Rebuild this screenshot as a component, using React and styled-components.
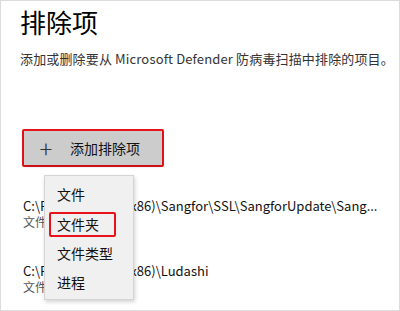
import styled, { createGlobalStyle } from "styled-components";

const GlobalStyle = createGlobalStyle`
  html, body {
    margin: 0;
    padding: 0;
    background: #ffffff;
  }
  body {
    font-family: "Noto Sans CJK SC", "Noto Sans", sans-serif;
  }
`;

const exclusions = [
  { path: "C:\\Program Files (x86)\\Sangfor\\SSL\\SangforUpdate\\Sang...", kind: "文件" },
  { path: "C:\\Program Files (x86)\\Ludashi", kind: "文件" },
];

const menuItems = ["文件", "文件夹", "文件类型", "进程"];

const App = () => {
  return (
    <>
      <GlobalStyle />
      <Frame>
        <Title>排除项</Title>
        <Description>
          添加或删除要从 Microsoft Defender 防病毒扫描中排除的项目。
        </Description>
        <ButtonArea>
          <Marked>
            <AddButton>
              <Plus>+</Plus>
              <span>添加排除项</span>
            </AddButton>
          </Marked>
          <Menu>
            {menuItems.map((item) => (
              <MenuItem key={item} $marked={item === "文件夹"}>
                {item}
              </MenuItem>
            ))}
          </Menu>
        </ButtonArea>
        <List>
          {exclusions.map((ex) => (
            <Row key={ex.path}>
              <Path>{ex.path}</Path>
              <Kind>{ex.kind}</Kind>
            </Row>
          ))}
        </List>
      </Frame>
    </>
  );
};

export default App;

const Frame = styled.div`
  box-sizing: border-box;
  width: 400px;
  height: 311px;
  border: 1px solid #dcdcdc;
  padding: 3px 20px 0 19px;
  overflow: hidden;
  color: #000;
`;

const Title = styled.h1`
  margin: 0;
  font-size: 26px;
  font-weight: 400;
  line-height: 36px;
`;

const Description = styled.p`
  margin: 10px 0 0;
  font-size: 13px;
  line-height: 18px;
  letter-spacing: 0.15px;
  color: #333;
  white-space: nowrap;
`;

const ButtonArea = styled.div`
  position: relative;
  margin-top: 61px;
  margin-left: 2px;
`;

const Marked = styled.div`
  display: inline-block;
  border: 2px solid #e8121b;
  border-radius: 2px;
`;

const AddButton = styled.div`
  display: flex;
  align-items: center;
  width: 138px;
  height: 34px;
  background: #cccccc;
  box-shadow: 0 2px 2px rgba(0, 0, 0, 0.15);
  font-size: 14px;
  color: #111;
`;

const Plus = styled.span`
  width: 16px;
  margin: 0 16px 0 14px;
  font-size: 24px;
  font-weight: 200;
  line-height: 1;
  text-align: center;
  color: #333;
`;

const Menu = styled.div`
  position: absolute;
  top: 46px;
  left: 22px;
  z-index: 2;
  box-sizing: border-box;
  width: 90px;
  height: 125px;
  padding: 4px 0 0 4px;
  background: #f0f0f0;
  border: 1px solid #d4d4d4;
  box-shadow: 1px 2px 4px rgba(0, 0, 0, 0.18);
  display: flex;
  flex-direction: column;
`;

const MenuItem = styled.div`
  align-self: flex-start;
  box-sizing: border-box;
  height: ${(p) => (p.$marked ? "25px" : "29px")};
  margin: ${(p) => (p.$marked ? "3px 0 2px" : "0")};
  padding: ${(p) => (p.$marked ? "0 15px 0 6px" : "0 0 0 6px")};
  border: ${(p) => (p.$marked ? "2px solid #e8121b" : "2px solid transparent")};
  border-radius: 2px;
  font-size: 14px;
  line-height: ${(p) => (p.$marked ? "21px" : "25px")};
  color: #111;
`;

const List = styled.div`
  margin-top: 30px;
  margin-left: 3px;
  display: flex;
  flex-direction: column;
  gap: 32px;
`;

const Row = styled.div`
  display: flex;
  flex-direction: column;
`;

const Path = styled.div`
  font-size: 13px;
  line-height: 17px;
  color: #111;
  white-space: nowrap;
`;

const Kind = styled.div`
  font-size: 12px;
  line-height: 16px;
  color: #555;
`;
